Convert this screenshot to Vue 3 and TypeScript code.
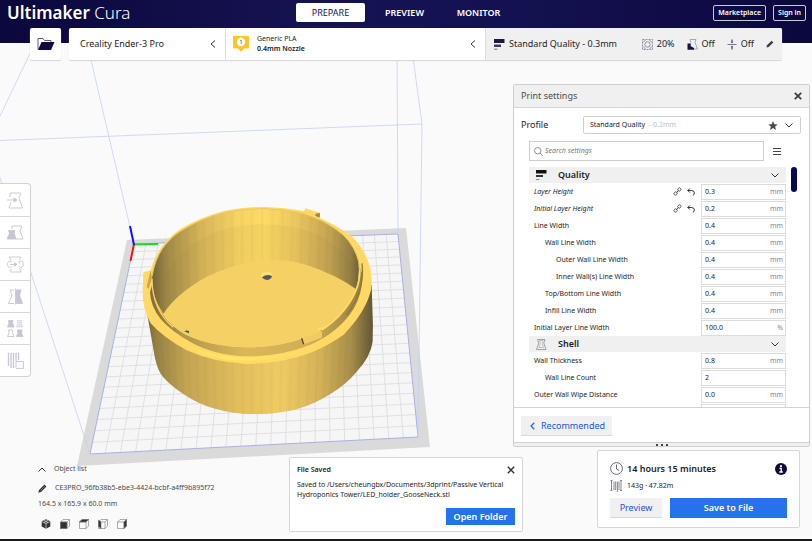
<script setup lang="ts">
import { ref } from 'vue'

interface Setting {
  label: string
  value: string
  unit: string
  depth: number
  changed?: boolean
}
interface Category {
  name: string
  icon: 'quality' | 'shell'
  settings: Setting[]
}
interface Point {
  x: number
  y: number
}

const stages = ['PREPARE', 'PREVIEW', 'MONITOR']
const stage = ref('PREPARE')
const search = ref('')
const profile = ref('Standard Quality')
const tools = ['Move', 'Scale', 'Rotate', 'Mirror', 'Per model settings', 'Support blocker']
const views = ['3D view', 'Front view', 'Top view', 'Left view', 'Right view']

const categories = ref<Category[]>([
  {
    name: 'Quality',
    icon: 'quality',
    settings: [
      { label: 'Layer Height', value: '0.3', unit: 'mm', depth: 0, changed: true },
      { label: 'Initial Layer Height', value: '0.2', unit: 'mm', depth: 0, changed: true },
      { label: 'Line Width', value: '0.4', unit: 'mm', depth: 0 },
      { label: 'Wall Line Width', value: '0.4', unit: 'mm', depth: 1 },
      { label: 'Outer Wall Line Width', value: '0.4', unit: 'mm', depth: 2 },
      { label: 'Inner Wall(s) Line Width', value: '0.4', unit: 'mm', depth: 2 },
      { label: 'Top/Bottom Line Width', value: '0.4', unit: 'mm', depth: 1 },
      { label: 'Infill Line Width', value: '0.4', unit: 'mm', depth: 1 },
      { label: 'Initial Layer Line Width', value: '100.0', unit: '%', depth: 0 },
    ],
  },
  {
    name: 'Shell',
    icon: 'shell',
    settings: [
      { label: 'Wall Thickness', value: '0.8', unit: 'mm', depth: 0 },
      { label: 'Wall Line Count', value: '2', unit: '', depth: 1 },
      { label: 'Outer Wall Wipe Distance', value: '0.0', unit: 'mm', depth: 0 },
      { label: 'Top Surface Skin Layers', value: '0', unit: '', depth: 0 },
    ],
  },
])

// Build plate corners on screen: back-left, back-right, front-right, front-left.
const plate: Point[] = [
  { x: 134, y: 244 },
  { x: 398, y: 234 },
  { x: 418, y: 437 },
  { x: 90, y: 454 },
]

// Maps a unit-square position onto the plate in perspective.
function project(u: number, v: number): string {
  const [a, b, c, d] = plate
  const dx1 = b.x - c.x
  const dx2 = d.x - c.x
  const dx3 = a.x - b.x + c.x - d.x
  const dy1 = b.y - c.y
  const dy2 = d.y - c.y
  const dy3 = a.y - b.y + c.y - d.y
  const det = dx1 * dy2 - dx2 * dy1
  const g = (dx3 * dy2 - dx2 * dy3) / det
  const h = (dx1 * dy3 - dx3 * dy1) / det
  const w = g * u + h * v + 1
  const x = ((b.x - a.x + g * b.x) * u + (d.x - a.x + h * d.x) * v + a.x) / w
  const y = ((b.y - a.y + g * b.y) * u + (d.y - a.y + h * d.y) * v + a.y) / w
  return `${x.toFixed(1)} ${y.toFixed(1)}`
}

const cells = 22
const gridPath = Array.from({ length: cells - 1 }, (_, i) => {
  const t = (i + 1) / cells
  return `M${project(t, 0)}L${project(t, 1)}M${project(0, t)}L${project(1, t)}`
}).join('')

const facets = Array.from({ length: 34 }, (_, i) => 382 - 344 * Math.cos((Math.PI * (i + 1)) / 35))
</script>

<template>
  <div class="app">
    <svg class="scene" viewBox="0 0 812 539" preserveAspectRatio="xMidYMid slice" aria-hidden="true">
      <defs>
        <linearGradient id="body" x1="0" x2="1">
          <stop offset="0" stop-color="#5f5433" />
          <stop offset=".07" stop-color="#978244" />
          <stop offset=".2" stop-color="#c4a553" />
          <stop offset=".42" stop-color="#e2bf5d" />
          <stop offset=".6" stop-color="#eecb62" />
          <stop offset=".76" stop-color="#d6b359" />
          <stop offset=".9" stop-color="#a78e4a" />
          <stop offset="1" stop-color="#5c5136" />
        </linearGradient>
        <linearGradient id="inside" x1="0" x2="1">
          <stop offset="0" stop-color="#6b5e37" />
          <stop offset=".08" stop-color="#a18a47" />
          <stop offset=".25" stop-color="#d9b75a" />
          <stop offset=".42" stop-color="#f7d463" />
          <stop offset=".54" stop-color="#fddb65" />
          <stop offset=".68" stop-color="#edc960" />
          <stop offset=".85" stop-color="#c3a352" />
          <stop offset=".95" stop-color="#937f43" />
          <stop offset="1" stop-color="#64573a" />
        </linearGradient>
        <linearGradient id="groove" x1="0" x2="1">
          <stop offset="0" stop-color="#7d6d3c" />
          <stop offset=".15" stop-color="#b1954b" />
          <stop offset=".45" stop-color="#dab859" />
          <stop offset=".75" stop-color="#cfae56" />
          <stop offset="1" stop-color="#96803f" />
        </linearGradient>
        <linearGradient id="shine" x1="0" x2="1">
          <stop offset=".1" stop-color="#ffe566" stop-opacity="0" />
          <stop offset=".45" stop-color="#ffe86a" />
          <stop offset=".9" stop-color="#ffe566" stop-opacity="0" />
        </linearGradient>
        <clipPath id="bodyClip">
          <path d="M45 320L75 490Q84 530 100 547Q125 575 160 597Q200 625 250 640Q310 658 375 658Q440 658 500 643Q555 627 600 598Q650 567 680 530Q722 485 728 440L729 390L725 270Z" />
        </clipPath>
        <clipPath id="insideClip">
          <path d="M100 356Q62 300 66 245Q74 195 98 160Q122 126 154 107Q212 70 287 52Q342 41 400 41Q463 42 520 56Q590 77 640 120Q675 155 686 200Q692 235 678 282Q620 240 530 210Q480 195 430 195Q330 198 230 245Q140 295 100 356Z" />
        </clipPath>
      </defs>
      <path d="M127 240L406 228L430 447L77 466Z" fill="#dadada" />
      <path d="M134 244L398 234L418 437L90 454Z" fill="#f6f6f7" />
      <path :d="gridPath" fill="none" stroke="#d9dadd" stroke-width=".8" />
      <path d="M134 244L398 234L418 437L90 454Z" fill="none" stroke="#a5b2e3" stroke-width="1" />
      <path d="M134 244L87 43M90 454L-12 141L35 43M-12 141L422 124M398 234L397 43M418 437L422 124L411 43" fill="none" stroke="#c3d0fa" stroke-width=".8" />
      <g fill="none" stroke-width="2">
        <path d="M134 244.500L158 244" stroke="#12e012" />
        <path d="M134 244L130.500 261" stroke="#f01515" />
        <path d="M134 245L130 226" stroke="#1414ee" />
      </g>
      <g transform="translate(130 195) scale(.3333)">
        <g clip-path="url(#bodyClip)">
          <path d="M30 250H735V665H30Z" fill="url(#body)" />
          <path v-for="(x, i) in facets" :key="i" :d="`M${x} 300L${x + (360 - x) * 0.08} 665`" stroke="#7c6a35" stroke-opacity=".04" stroke-width="8" />
        </g>
        <path d="M38 285L40 232L62 226Q70 195 85 172Q105 135 150 103Q210 66 285 47Q340 36 400 36Q465 37 522 49L526 40L570 54L569 68Q630 96 670 128Q705 165 720 215Q728 250 723 285Q708 350 640 420Q590 455 540 474Q450 507 350 507Q250 502 170 466Q100 428 62 385Q36 340 38 285Z" fill="#ffd964" />
        <path d="M62 226L50 275L56 282L66 250Z" fill="#c8a750" />
        <path d="M570 54L569 68L556 62L557 56Z" fill="#9b8548" />
        <path d="M60 292Q62 335 92 372Q125 410 180 440Q250 480 350 484Q450 485 540 450Q630 410 672 340Q700 290 697 235L690 220Q682 300 640 350Q600 400 520 430Q440 458 350 457Q240 455 165 418Q80 370 66 270Z" fill="url(#groove)" />
        <path d="M100 405Q190 490 350 492Q480 492 575 440" fill="none" stroke="url(#shine)" stroke-width="11" />
        <path d="M66 270Q62 300 90 345Q70 285 70 240Z" fill="#77683b" />
        <path d="M68 285Q80 345 100 356Q140 295 230 245Q330 198 430 195Q480 195 530 210Q620 240 678 282Q655 338 600 388L560 402L575 412Q540 428 520 430Q440 458 350 457Q240 455 165 418Q105 385 68 285Z" fill="#f5d064" />
        <path d="M68 285Q80 330 100 356L108 346Q80 300 72 262Z" fill="#e5c25e" />
        <g clip-path="url(#insideClip)">
          <path d="M60 30H695V360H60Z" fill="url(#inside)" />
          <path d="M60 350Q130 95 385 88Q600 84 690 235V360H60Z" fill="#7c6a35" fill-opacity=".06" />
          <path v-for="(x, i) in facets" :key="i" :d="`M${x} 30L${x + (360 - x) * 0.06} 360`" stroke="#7c6a35" stroke-opacity=".04" stroke-width="8" />
        </g>
        <path d="M66 245Q74 195 98 160Q122 126 154 107Q212 70 287 52Q342 41 400 41Q463 42 520 56Q590 77 640 120Q675 155 686 200Q690 225 686 250" fill="none" stroke="#eac75d" stroke-width="3" />
        <path d="M696 205Q706 285 650 360" fill="none" stroke="#8c7941" stroke-width="4" />
        <path d="M690 225Q690 288 640 348Q610 384 575 405" fill="none" stroke="#ffdc66" stroke-width="5" />
        <path d="M66 250Q66 345 130 397" fill="none" stroke="#f7d260" stroke-width="4" />
        <path d="M560 402L576 410V428L522 448L515 430Q550 420 572 408Z" fill="#f0cb60" />
        <path d="M515 430L521 448" stroke="#4f4835" stroke-width="4" />
        <ellipse cx="410" cy="242" rx="17" ry="12" fill="#ffe36b" />
        <path d="M396 247Q410 236 426 243Q424 254 410 255Q400 254 396 247Z" fill="#545866" />
        <path d="M152 403Q166 395 178 405V416Z" fill="#e9d26c" />
        <path d="M163 409Q171 403 178 410L176 415Z" fill="#4e535d" />
      </g>
    </svg>

    <header class="topbar">
      <h1 class="brand"><b>Ultimaker</b> Cura</h1>
      <nav class="stages" aria-label="Stages">
        <button v-for="s in stages" :key="s" class="stage" :class="{ active: s === stage }" @click="stage = s">{{ s }}</button>
      </nav>
      <div class="account">
        <button class="outlined">Marketplace</button>
        <button class="outlined">Sign in</button>
      </div>
    </header>

    <section class="stagebar">
      <button class="open" aria-label="Open file">
        <svg width="18" height="14" viewBox="0 0 18 14">
          <path d="M1 12.500V1.500H6L7.500 3.500H14V5" fill="none" stroke="#5c5b7c" />
          <path d="M4.500 5H17.500L14 13H1Z" fill="#0d0a42" />
        </svg>
      </button>
      <div class="selectors">
        <button class="machine">
          <span>Creality Ender-3 Pro</span>
          <svg width="6" height="8" viewBox="0 0 6 8"><path d="M5 .5L1 4L5 7.500" fill="none" stroke="#333" /></svg>
        </button>
        <button class="material">
          <svg width="16" height="16" viewBox="0 0 16 16">
            <path d="M0 0H16V12.500H11L8 16L5 12.500H0Z" fill="#fbc628" />
            <circle cx="8" cy="6" r="4.200" fill="#fff" />
            <path d="M7 5L8.200 4V8.200" fill="none" stroke="#a58a35" stroke-width=".9" />
          </svg>
          <span class="stack"><span>Generic PLA</span><b>0.4mm Nozzle</b></span>
          <svg width="6" height="8" viewBox="0 0 6 8"><path d="M5 .5L1 4L5 7.500" fill="none" stroke="#333" /></svg>
        </button>
        <button class="summary">
          <svg width="11" height="11" viewBox="0 0 11 11"><path d="M0 0H10.500V4H0Z" fill="#1c1a45" /><path d="M0 5.500H7V8H0Z" fill="#3c3a60" /><path d="M0 9.700H3.500V10.700H0Z" fill="#77768f" /></svg>
          <span class="grow">Standard Quality - 0.3mm</span>
          <span class="fact">
            <svg width="11" height="11" viewBox="0 0 11 11" fill="none" stroke="#77768f" stroke-width=".8">
              <rect x=".5" y=".5" width="10" height="10" stroke-dasharray="2 1" />
              <path d="M3.500 1L1 3.500M7.500 1L10 3.500M1 7.500L3.500 10M10 7.500L7.500 10" /><circle cx="5.500" cy="5.500" r="2.700" />
            </svg>20%
          </span>
          <span class="fact">
            <svg width="11" height="11" viewBox="0 0 11 11"><path d="M3 .5H9L8 3.500L10.500 10H6M3 .5L4 3.500" fill="none" stroke="#9594aa" stroke-width=".8" /><path d="M.5 4.500H4L3.500 7L7 9V10.700H.5Z" fill="#16133f" /></svg>Off
          </span>
          <span class="fact">
            <svg width="10" height="11" viewBox="0 0 10 11"><path d="M.5 5.500H9.500" stroke="#77768f" /><path d="M5 .5V3.500M5 7.500V10.500" stroke="#55547a" stroke-width="1.300" /><path d="M3.700 2.800H6.300L5 4.500ZM3.700 8.200H6.300L5 6.500Z" fill="#55547a" /></svg>Off
          </span>
          <svg width="8" height="8" viewBox="0 0 8 8"><path d="M.5 7.500L1 5.300L5.600 .7L7.300 2.400L2.700 7Z" fill="#3c3c3c" /></svg>
        </button>
      </div>
    </section>

    <main class="workspace">
      <div class="tools" role="toolbar" aria-label="Tools">
        <button v-for="(t, i) in tools" :key="t" class="tool" :aria-label="t">
          <svg width="17" height="17" viewBox="0 0 17 17" fill="none" stroke="#c6c5d4" stroke-width=".9">
            <template v-if="i === 0"><path d="M3 5V1H14L12 6L15.500 16H2L4 10M0 8H8" /><path d="M7 6L10 8L7 10Z" fill="#c6c5d4" /></template>
            <template v-else-if="i === 1"><path d="M5 5V2H15L13 7L16 15H9" /><path d="M1.500 6.500H8L7.300 9.500L9 15H0L2.500 9.500Z" fill="#c6c5d4" /></template>
            <template v-else-if="i === 2"><path d="M4 4L2.500 1H13.500L12.500 4M4.500 13L3 16H14L12.500 12M3 8.500H8M1 10.500Q-.5 7 1.500 5.500Q4 4 5 6.500M1 10.500Q3 12.500 4.500 11M12.500 5.500Q15 4 16 6.500Q17 10 15 11.500Q13 12 12 10M12.500 5.500L12 7.500" /><path d="M7.500 6.800L10 8.500L7.500 10.200Z" fill="#c6c5d4" /></template>
            <template v-else-if="i === 3"><path d="M7 2H3L5 7L1.500 15.500H7M8.500 .5V16.500" /><path d="M9.500 2H14L12.500 7L15.500 15.500H9.500Z" fill="#c6c5d4" /></template>
            <template v-else-if="i === 4">
              <path d="M1.500 .5H6L5.500 3L7 7H.5L2 3ZM10.500 10H15L14.500 13L16 16.500H9.500L11 13Z" fill="#c6c5d4" />
              <path d="M1.500 10H6L5.500 13L7 16.500H.5L2 13Z" /><path d="M10.500 .5H15L14.500 3L16 7H9.500L11 3Z" stroke-dasharray="1 1" fill="#e6e6ee" />
            </template>
            <template v-else><path d="M1.500 1V14M4 1V16M6.500 1V16M9 1V9M11.500 1V8" stroke-width="1.300" /><path d="M9 9.500H16.500V16.500H9Z" fill="#fff" /></template>
          </svg>
        </button>
      </div>

      <section class="panel" aria-label="Print settings">
        <div class="panel-head">
          <h2>Print settings</h2>
          <button class="plain" aria-label="Close print settings">
            <svg width="8" height="8" viewBox="0 0 8 8"><path d="M.8 .8L7.200 7.200M7.200 .8L.8 7.200" stroke="#3a3a3a" stroke-width="1.700" /></svg>
          </button>
        </div>
        <div class="profile">
          <label for="profile">Profile</label>
          <div class="profile-box">
            <select id="profile" v-model="profile"><option>Standard Quality</option></select>
            <span class="muted grow">- 0.2mm</span>
            <svg width="10" height="9" viewBox="0 0 10 9"><path d="M5 0L6.300 3.200L9.800 3.400L7.100 5.500L8 9L5 7.100L2 9L2.900 5.500L.2 3.400L3.700 3.200Z" fill="#4a4a4a" /></svg>
            <svg width="8" height="5" viewBox="0 0 8 5"><path d="M.5 .5L4 4L7.500 .5" fill="none" stroke="#333" /></svg>
          </div>
        </div>
        <div class="search">
          <div class="search-box">
            <svg width="9" height="9" viewBox="0 0 9 9" fill="none" stroke="#777" stroke-width=".8"><circle cx="3.700" cy="3.700" r="3.200" /><path d="M6 6L8.700 8.700" /></svg>
            <input v-model="search" type="text" placeholder="Search settings" aria-label="Search settings" />
          </div>
          <button class="plain" aria-label="Setting visibility">
            <svg width="8" height="7" viewBox="0 0 8 7"><path d="M0 .5H8M0 3.500H8M0 6.500H8" stroke="#444" /></svg>
          </button>
        </div>
        <div class="list">
          <div class="list-body">
            <template v-for="cat in categories" :key="cat.name">
              <button class="category">
                <svg v-if="cat.icon === 'quality'" width="11" height="10" viewBox="0 0 11 10"><path d="M0 0H10.500V3.500H0Z" fill="#111" /><path d="M0 5H7V7H0Z" fill="#333" /><path d="M0 9H3.500V10H0Z" fill="#888" /></svg>
                <svg v-else width="11" height="11" viewBox="0 0 11 11" fill="none" stroke="#999" stroke-width=".9"><path d="M1.500 .5H9L7.800 4L10 10.500H.5L2.800 4Z" /><path d="M3.500 1.500H7L6.200 4.500L7.500 8.500H3L4.300 4.500Z" stroke="#bbb" /></svg>
                <span class="grow">{{ cat.name }}</span>
                <svg width="8" height="5" viewBox="0 0 8 5"><path d="M.5 .5L4 4L7.500 .5" fill="none" stroke="#333" /></svg>
              </button>
              <div v-for="s in cat.settings" :key="s.label" class="setting">
                <label :for="s.label" class="grow" :class="['depth-' + s.depth, { changed: s.changed }]">{{ s.label }}</label>
                <template v-if="s.changed">
                  <svg width="9" height="9" viewBox="0 0 9 9" fill="none" stroke="#444" stroke-width=".9"><rect x="4.800" y="1" width="3.200" height="3" rx="1.400" transform="rotate(-45 6.400 2.500)" /><rect x="1" y="5" width="3.200" height="3" rx="1.400" transform="rotate(-45 2.600 6.500)" /><path d="M3.300 5.700L5.700 3.300" /></svg>
                  <button class="plain reset" :aria-label="'Reset ' + s.label">
                    <svg width="8" height="8" viewBox="0 0 8 8"><path d="M.8 2.500H4.500Q7.400 2.700 7.400 5Q7.300 6.700 5.800 7.500M2.800 .5L.8 2.500L2.800 4.500" fill="none" stroke="#333" /></svg>
                  </button>
                </template>
                <span class="field">
                  <input :id="s.label" v-model="s.value" type="text" />
                  <span class="unit">{{ s.unit }}</span>
                </span>
              </div>
            </template>
          </div>
          <div class="scroll"></div>
        </div>
        <div class="panel-foot">
          <button class="secondary recommended">
            <svg width="5" height="8" viewBox="0 0 5 8"><path d="M4.300 .7L1 4L4.300 7.300" fill="none" stroke="#196ef0" stroke-width="1.300" /></svg>
            Recommended
          </button>
        </div>
        <div class="grip"><i></i><i></i><i></i></div>
      </section>
    </main>

    <footer class="bottom">
      <section class="objects">
        <button class="plain object-toggle">
          <svg width="8" height="5" viewBox="0 0 8 5"><path d="M.5 4.500L4 1L7.500 4.500" fill="none" stroke="#333" /></svg>
          Object list
        </button>
        <button class="plain object-name">
          <svg width="9" height="9" viewBox="0 0 9 9"><path d="M.3 8.700L1 6L6.400 .6L8.400 2.600L3 8Z" fill="#333" /><path d="M2.500 6.500L6.500 2.500" stroke="#aaa" stroke-width=".6" /></svg>
          CE3PRO_96fb38b5-ebe3-4424-bcbf-a4ff9b895f72
        </button>
        <p>164.5 x 165.9 x 60.0 mm</p>
        <div class="views">
          <button v-for="(v, i) in views" :key="v" class="plain" :aria-label="v">
            <svg width="10" height="10" viewBox="0 0 10 10" fill="none" stroke="#777" stroke-width=".6">
              <template v-if="i === 0"><path d="M5 .3L9.300 2.200V7.500L5 9.700L.7 7.500V2.200Z" fill="#333" stroke="none" /><path d="M.7 2.500L5 4.500L9.300 2.500M5 4.500V9.700M3 1.300L7 3.500M7 1.300L3 3.500" stroke="#fafafa" /></template>
              <template v-else>
                <path d="M.5 3H7V9.500H.5ZM.5 3L3 .5H9.500L7 3M9.500 .5V7L7 9.500" />
                <path v-if="i === 1" d="M.5 3H7V9.500H.5Z" fill="#333" />
                <path v-else-if="i === 2" d="M.5 3L3 .5H9.500L7 3Z" fill="#333" />
                <path v-else-if="i === 3" d="M.5 1L3 3V9.500L.5 7.500Z" fill="#333" />
                <path v-else d="M7 3L9.500 .5V7L7 9.500Z" fill="#333" />
              </template>
            </svg>
          </button>
        </div>
      </section>

      <section class="message" role="status">
        <div class="message-head">
          <h3>File Saved</h3>
          <button class="plain" aria-label="Dismiss message">
            <svg width="8" height="8" viewBox="0 0 8 8"><path d="M.8 .8L7.200 7.200M7.200 .8L.8 7.200" stroke="#333" stroke-width="1.400" /></svg>
          </button>
        </div>
        <p>Saved to /Users/cheungbx/Documents/3dprint/Passive Vertical Hydroponics Tower/LED_holder_GooseNeck.stl</p>
        <button class="primary">Open Folder</button>
      </section>

      <section class="job">
        <div class="job-line time">
          <svg width="13" height="13" viewBox="0 0 13 13" fill="none" stroke="#55547a" stroke-width=".9"><circle cx="6.500" cy="6.500" r="5.900" /><path d="M6.500 2.500V7L9 8.500" /></svg>
          <b class="grow">14 hours 15 minutes</b>
          <button class="plain" aria-label="Time details">
            <svg width="12" height="12" viewBox="0 0 12 12"><circle cx="6" cy="6" r="6" fill="#0d0b3c" /><circle cx="6" cy="3.200" r="1.100" fill="#fff" /><path d="M4.500 5.300H6.200V9M4.300 9H7.800" fill="none" stroke="#fff" stroke-width="1.300" /></svg>
          </button>
        </div>
        <div class="job-line">
          <svg width="13" height="12" viewBox="0 0 13 12" fill="none" stroke="#77768f" stroke-width=".9"><path d="M1.500 0V11M4 1.500V10M5.700 1.500V10M7.400 1.500V12M9 1.500V10M11 0V11M.5 .5H2.500M10 .5H12M.5 10.500H2.500M10 10.500H12" /></svg>
          <span>143g · 47.82m</span>
        </div>
        <div class="job-actions">
          <button class="secondary">Preview</button>
          <button class="primary">Save to File</button>
        </div>
      </section>
    </footer>
  </div>
</template>

<style>
body {
  margin: 0;
  background: #fafafa;
}
</style>

<style scoped>
.app {
  position: relative;
  display: flex;
  flex-direction: column;
  box-sizing: border-box;
  height: 100vh;
  border-bottom: 2px solid #1b1b1f;
  overflow: hidden;
  background: #fafafa;
  color: #1d1d1d;
  font: 8px/12px 'Noto Sans', sans-serif;
}
.app * {
  box-sizing: border-box;
}
.scene {
  position: absolute;
  inset: 0;
  width: 100%;
  height: 100%;
}
button,
input,
select {
  margin: 0;
  padding: 0;
  border: 0;
  background: none;
  color: inherit;
  font: inherit;
}
h1,
h2,
h3,
p {
  margin: 0;
  font: inherit;
}
svg {
  display: block;
  flex: none;
}
.grow {
  flex: 1;
  text-align: left;
}
.plain {
  display: flex;
  align-items: center;
}
.topbar {
  position: relative;
  display: grid;
  grid-template-columns: 1fr auto 1fr;
  align-items: start;
  height: 43px;
  padding: 3px 6px 0 7px;
  background: linear-gradient(90deg, #0a083c, #161353 40%, #141150 65%, #0a083f);
  color: #fff;
}
.brand {
  font-size: 17px;
  line-height: 20px;
  font-weight: 300;
}
.brand b {
  font-weight: 600;
}
.stages {
  display: flex;
  gap: 5px;
  margin-right: 4px;
}
.stage {
  width: 69px;
  height: 19px;
  border-radius: 2px;
  font-size: 9px;
  font-weight: 600;
}
.stage.active {
  background: #fff;
  color: #191550;
  font-weight: 400;
}
.account {
  display: flex;
  justify-content: flex-end;
  gap: 7px;
  padding-top: 2px;
}
.outlined {
  height: 16px;
  padding: 0 4px;
  border: 1px solid #c9c9da;
  border-radius: 2px;
  font-size: 7px;
  font-weight: 600;
}
.stagebar {
  position: relative;
  display: flex;
  gap: 8px;
  height: 32px;
  margin: -15px 30px 0;
  font-size: 9px;
}
.open {
  display: flex;
  align-items: center;
  justify-content: center;
  width: 31px;
  border-radius: 2px;
  background: #fff;
  box-shadow: 0 1px 1px #d5d5d8;
}
.selectors {
  display: grid;
  flex: 1;
  grid-template-columns: 156fr 260fr 297fr;
  border-radius: 2px;
  background: #fff;
  box-shadow: 0 1px 1px #d5d5d8;
}
.selectors button {
  display: flex;
  align-items: center;
}
.machine {
  justify-content: space-between;
  padding: 0 9px 0 11px;
}
.material {
  gap: 8px;
  padding: 0 9px 0 7px;
  border-left: 1px solid #ddd;
}
.stack {
  flex: 1;
  display: flex;
  flex-direction: column;
  font-size: 7px;
  line-height: 10px;
  text-align: left;
}
.stack b {
  font-weight: 600;
}
.summary {
  gap: 4px;
  padding: 0 8px;
  border-left: 1px solid #ddd;
  border-radius: 0 2px 2px 0;
  background: #f0f0f0;
}
.fact {
  display: flex;
  align-items: center;
  gap: 4px;
  margin-right: 8px;
}
.workspace {
  position: relative;
  display: flex;
  flex: 1;
  justify-content: space-between;
  min-height: 0;
  padding: 24px 2px 0 0;
}
.tools {
  align-self: flex-start;
  margin-top: 100px;
  border-radius: 0 3px 3px 0;
  background: #fff;
  box-shadow: 0 0 0 1px #d3d3d6;
}
.tool {
  display: flex;
  align-items: center;
  justify-content: center;
  width: 30px;
  height: 32px;
}
.tool + .tool {
  border-top: 1px solid #d8d8da;
}
.panel {
  display: flex;
  flex-direction: column;
  width: 297px;
  border: 1px solid #cfcfcf;
  border-radius: 2px;
  background: #fff;
}
.panel-head {
  display: flex;
  align-items: center;
  justify-content: space-between;
  height: 23px;
  padding: 0 7px;
  border-bottom: 1px solid #d4d4d4;
  background: #f0f0f0;
  color: #4d4d4d;
  font-size: 9px;
}
.profile {
  display: flex;
  align-items: center;
  justify-content: space-between;
  padding: 8px 8px 0 7px;
  font-size: 9px;
}
.profile-box {
  display: flex;
  align-items: center;
  gap: 3px;
  width: 218px;
  height: 18px;
  padding: 0 7px 0 6px;
  border: 1px solid #cfcfcf;
  border-radius: 2px;
  font-size: 7px;
}
.profile-box select {
  appearance: none;
}
.profile-box svg + svg {
  margin-left: 4px;
}
.muted {
  color: #c0c0c0;
}
.search {
  display: flex;
  align-items: center;
  gap: 9px;
  padding: 7px 28px 0 15px;
}
.search-box {
  display: flex;
  flex: 1;
  align-items: center;
  gap: 2px;
  height: 20px;
  padding: 0 4px;
  border: 1px solid #cfcfcf;
}
.search-box input {
  flex: 1;
  min-width: 0;
  font-size: 7px;
  font-style: italic;
}
.search-box input::placeholder {
  color: #777;
}
.list {
  display: flex;
  flex: 1;
  gap: 5px;
  min-height: 0;
  margin-top: 6px;
  padding: 0 12px 0 15px;
}
.list-body {
  flex: 1;
  overflow-y: auto;
  scrollbar-width: none;
}
.scroll {
  width: 6px;
  height: 25px;
  border-radius: 3px;
  background: #0a0850;
}
.category {
  display: flex;
  align-items: center;
  gap: 11px;
  width: 100%;
  height: 16px;
  padding: 0 7px;
  background: #f0f0f0;
  font-size: 9px;
  font-weight: 600;
}
.setting {
  display: flex;
  align-items: center;
  height: 17px;
  padding-left: 5px;
  font-size: 7px;
}
.depth-1 {
  padding-left: 11px;
}
.depth-2 {
  padding-left: 22px;
}
.changed {
  font-style: italic;
}
.reset {
  margin: 0 6px 0 5px;
}
.field {
  display: flex;
  align-items: center;
  width: 85px;
  height: 16px;
  padding: 0 2px 0 3px;
  border: 1px solid #dcdcdc;
}
.field input {
  flex: 1;
  min-width: 0;
}
.unit {
  color: #888;
}
.panel-foot {
  height: 35px;
  padding: 8px 7px 0;
  border-top: 1px solid #d4d4d4;
}
.secondary {
  background: #f0f0f0;
  border-bottom: 1px solid #d8d8d8;
  color: #1c55d4;
  font-size: 9px;
}
.recommended {
  display: flex;
  align-items: center;
  gap: 6px;
  width: 91px;
  height: 20px;
  padding: 0 9px;
}
.grip {
  display: flex;
  align-items: center;
  justify-content: center;
  gap: 3px;
  height: 4px;
  border-top: 1px solid #d0d0d0;
  background: #f0f0f0;
}
.grip i {
  width: 2px;
  height: 2px;
  background: #444;
}
.bottom {
  position: relative;
  display: grid;
  grid-template-columns: 1fr auto 1fr;
  align-items: start;
  padding: 3px 12px 7px 38px;
}
.objects {
  display: flex;
  flex-direction: column;
  align-items: flex-start;
  padding-top: 13px;
  color: #4a4a4a;
  font-size: 7px;
}
.object-toggle {
  gap: 8px;
}
.object-name {
  gap: 8px;
  margin: 7px 0 4px;
}
.views {
  display: flex;
  gap: 9px;
  padding: 9px 3px 0;
}
.message {
  width: 234px;
  margin: 7px 0 0 -26px;
  padding: 6px 7px;
  border: 1px solid #d6d6d6;
  border-radius: 2px;
  background: #fff;
  font-size: 7px;
}
.message-head {
  display: flex;
  align-items: center;
  justify-content: space-between;
}
.message h3 {
  font-weight: 600;
}
.message p {
  padding: 4px 0 8px;
  line-height: 10px;
}
.message .primary {
  display: block;
  width: 69px;
  height: 17px;
  margin-left: auto;
}
.primary {
  background: #2672ea;
  color: #fff;
  font-size: 9px;
  font-weight: 600;
}
.job {
  justify-self: end;
  width: 203px;
  padding: 9px 12px;
  border: 1px solid #d6d6d6;
  border-radius: 2px;
  background: #fff;
  font-size: 7px;
}
.job-line {
  display: flex;
  align-items: center;
  gap: 4px;
  height: 17px;
}
.time {
  font-size: 9px;
}
.time b {
  font-weight: 600;
}
.job-actions {
  display: flex;
  gap: 8px;
  margin-top: 4px;
}
.job-actions button {
  height: 20px;
}
.job-actions .secondary {
  width: 52px;
}
.job-actions .primary {
  flex: 1;
}
</style>
